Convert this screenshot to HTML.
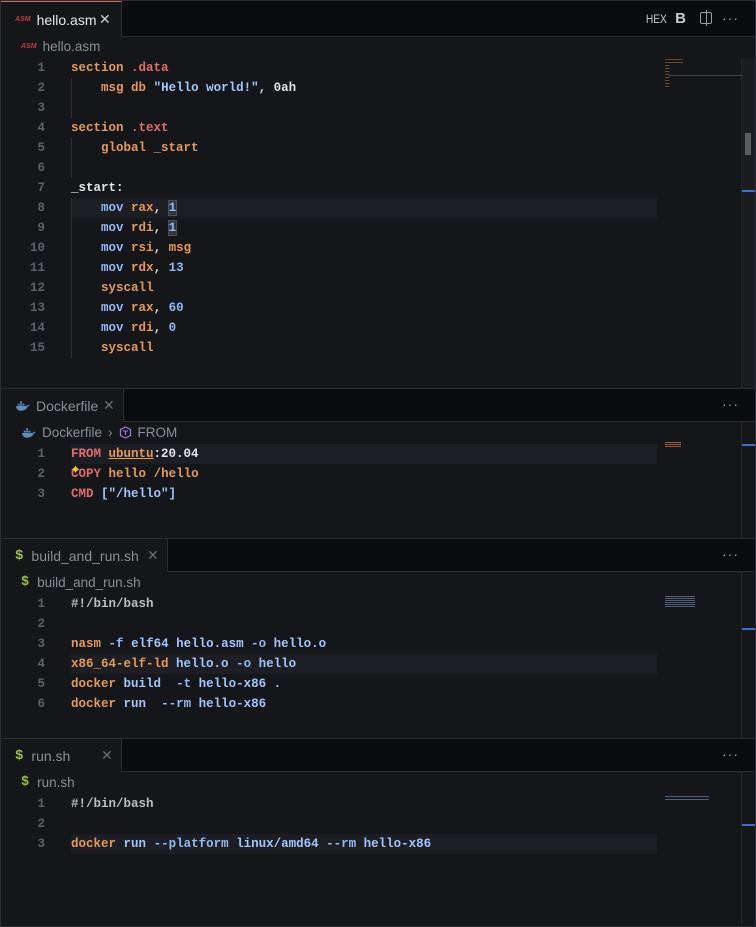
<!DOCTYPE html>
<html><head><meta charset="utf-8"><style>
*{margin:0;padding:0;box-sizing:border-box}
body{width:756px;height:927px;background:#15161a;overflow:hidden;font-family:"Liberation Sans",sans-serif;position:relative}
.pane{position:absolute;left:0;width:756px;background:#15161a;border-left:1px solid #2b2d33;border-right:1px solid #2b2d33}
.tabbar{position:absolute;left:0;top:0;right:0;background:#0a0b0e;border-bottom:1px solid #2b2d33}
.tab{position:absolute;left:0;top:0;bottom:-1px;background:#15161a;border-right:1px solid #2b2d33;color:#8a8d95;font-size:14px;display:flex;align-items:center;padding-left:14px}
.tab.act{color:#e8e8ea;border-top:1px solid #c8705a}
.x{position:absolute;font-size:14px;color:#6a6d74;font-weight:300}
.bc{position:absolute;left:20px;color:#8a8d95;font-size:13.5px;display:flex;align-items:center;gap:6px}
.ln{position:absolute;left:0;width:44px;text-align:right;font:bold 12.5px "Liberation Mono",monospace;color:#5d6068;line-height:20px}
.ln.c{color:#e8e8ea}
.code{position:absolute;left:70px;font:bold 12.5px "Liberation Mono",monospace;line-height:20px;white-space:pre;color:#d8d9dc}
.hl{position:absolute;left:70px;width:586px;height:20px;background:#1c1e23}
.o{color:#e59a54}.r{color:#e06c6c}.b{color:#8fbaf5}.s{color:#9ec6ff}.g{color:#b9bcc2}.w{color:#e3e4e6}
.dots{position:absolute;right:16px;color:#9a9da4;font-size:14px;letter-spacing:1px}
.sb{position:absolute;right:0;width:14px;border-left:1px solid #24262b}
.mark{position:absolute;right:0;width:13px;height:2px;background:#3d6fd0}
.asm{color:#c03a45;font-size:7px;font-weight:bold;font-style:italic}
.dl{color:#9ac131;font-weight:bold;font-family:"Liberation Mono",monospace}
.guide{position:absolute;left:70px;width:1px;background:#2e3036}
</style></head><body>
<svg width="0" height="0" style="position:absolute"><defs><symbol id="whale" viewBox="0 0 16 12"><path d="M1 6h11c1 0 1.5-1 2-1.5l1.5 .5c-.5 1-1.2 1.3-1.8 1.4C12.5 9.5 10 11 6 11 3 11 1.5 9 1 6z" fill="#5d8cbf"/><rect x="3" y="3.5" width="2" height="2" fill="#5d8cbf"/><rect x="5.5" y="3.5" width="2" height="2" fill="#5d8cbf"/><rect x="8" y="3.5" width="2" height="2" fill="#5d8cbf"/><rect x="5.5" y="1" width="2" height="2" fill="#5d8cbf"/></symbol></defs></svg>

<div class="pane" style="top:0;height:388px;border-top:1px solid #2b2d33">
 <div class="tabbar" style="height:36px">
  <div class="tab act" style="width:121px"><span class="asm" style="margin-right:6px">ASM</span>hello.asm<span class="x" style="left:98px;color:#d0d0d3">✕</span></div>
  <div style="position:absolute;right:86px;top:11px;color:#c9cbcf;font-size:12px;transform:scaleX(.85)">HEX</div>
  <div style="position:absolute;right:69px;top:9px;color:#c9cbcf;font-size:15px;font-weight:bold">B</div>
  <div style="position:absolute;right:43px;top:11px;width:12px;height:12px;border:1px solid #9a9da4;border-radius:2px"><div style="position:absolute;left:5px;top:-3px;width:1px;height:16px;background:#9a9da4"></div></div>
  <div class="dots" style="top:9px">···</div>
 </div>
 <div class="bc" style="top:38px"><span class="asm">ASM</span>hello.asm</div>
 <div class="sb" style="top:57px;bottom:0;background:#1b1c20"><div style="position:absolute;left:3px;top:75px;width:6px;height:22px;background:#5a5c62"></div><div class="mark" style="top:132px"></div></div>
 <div style="position:absolute;left:668px;top:74px;width:74px;height:1px;background:#45474c"></div>
 <div style="position:absolute;left:664px;top:58px;width:30px;height:30px;background:repeating-linear-gradient(#8a5a30 0 1px,transparent 1px 3px);opacity:.7;clip-path:polygon(0 0,60% 0,60% 15%,15% 15%,15% 100%,0 100%)"></div>
 <div class="hl" style="top:197px"></div>
 <div class="guide" style="top:77px;height:40px"></div>
 <div class="guide" style="top:137px;height:40px"></div>
 <div class="guide" style="top:197px;height:160px"></div>
 <div class="ln" style="top:57px">1<br>2<br>3<br>4<br>5<br>6<br>7<br><span class="c">8</span><br>9<br>10<br>11<br>12<br>13<br>14<br>15</div>
 <div class="code" style="top:57px"><span class="o">section</span> <span class="r">.data</span>
    <span class="o">msg</span> <span class="o">db</span> <span class="s">"Hello world!"</span>, <span class="w">0ah</span>

<span class="o">section</span> <span class="r">.text</span>
    <span class="o">global</span> <span class="o">_start</span>

<span class="w">_start:</span>
    <span class="b">mov</span> <span class="o">rax</span>, <span class="b" style="background:#2e3440;outline:1px solid #4a4f5a">1</span>
    <span class="b">mov</span> <span class="o">rdi</span>, <span class="b" style="background:#2e3440;outline:1px solid #4a4f5a">1</span>
    <span class="b">mov</span> <span class="o">rsi</span>, <span class="o">msg</span>
    <span class="b">mov</span> <span class="o">rdx</span>, <span class="b">13</span>
    <span class="o">syscall</span>
    <span class="b">mov</span> <span class="o">rax</span>, <span class="b">60</span>
    <span class="b">mov</span> <span class="o">rdi</span>, <span class="b">0</span>
    <span class="o">syscall</span></div>
</div>

<div class="pane" style="top:388px;height:150px;border-top:1px solid #2b2d33">
 <div class="tabbar" style="height:33px">
  <div class="tab" style="width:123px"><svg width="15" height="12" style="margin-right:6px"><use href="#whale"/></svg>Dockerfile<span class="x" style="left:102px">✕</span></div>
  <div class="dots" style="top:7px">···</div>
 </div>
 <div class="bc" style="top:36px"><svg width="15" height="12"><use href="#whale"/></svg>Dockerfile <span>›</span><svg width="13" height="13" viewBox="0 0 13 13"><path d="M6.5 1l5 2.5v6l-5 2.5-5-2.5v-6z" fill="none" stroke="#a77be0" stroke-width="1.2"/><path d="M4 5h5M6.5 5v4" stroke="#a77be0" stroke-width="1.1"/></svg>FROM</div>
 <div class="sb" style="top:33px;bottom:0"><div class="mark" style="top:22px"></div></div>
 <div style="position:absolute;left:664px;top:53px;width:16px;height:6px;background:repeating-linear-gradient(#9a5a40 0 1px,transparent 1px 2px)"></div>
 <div class="hl" style="top:55px"></div>
 <div class="ln" style="top:55px"><span class="c">1</span><br>2<br>3</div>
 <div class="code" style="top:55px"><span class="r">FROM</span> <span class="o" style="text-decoration:underline">ubuntu</span><span class="w">:20.04</span>
<span class="r">COPY</span> <span class="o">hello</span> <span class="o">/hello</span>
<span class="r">CMD</span> <span class="s">["/hello"]</span></div>
 <div style="position:absolute;left:69px;top:73px;color:#f5c518;font-size:13px">✦</div>
</div>

<div class="pane" style="top:538px;height:200px;border-top:1px solid #2b2d33">
 <div class="tabbar" style="height:33px">
  <div class="tab" style="width:167px"><span class="dl" style="margin-right:8px">$</span>build_and_run.sh<span class="x" style="left:146px">✕</span></div>
  <div class="dots" style="top:7px">···</div>
 </div>
 <div class="bc" style="top:36px"><span class="dl" style="margin-right:2px">$</span>build_and_run.sh</div>
 <div class="sb" style="top:33px;bottom:0"><div class="mark" style="top:56px"></div></div>
 <div style="position:absolute;left:664px;top:57px;width:30px;height:12px;background:repeating-linear-gradient(#6a7ea0 0 1px,transparent 1px 2px);opacity:.7"></div>
 <div class="hl" style="top:115px"></div>
 <div class="ln" style="top:55px">1<br>2<br>3<br><span class="c">4</span><br>5<br>6</div>
 <div class="code" style="top:55px"><span class="g">#!/bin/bash</span>

<span class="o">nasm</span> <span class="b">-f</span> <span class="s">elf64 hello.asm</span> <span class="b">-o</span> <span class="s">hello.o</span>
<span class="o">x86_64-elf-ld</span> <span class="s">hello.o</span> <span class="b">-o</span> <span class="s">hello</span>
<span class="o">docker</span> <span class="s">build</span>  <span class="b">-t</span> <span class="s">hello-x86 .</span>
<span class="o">docker</span> <span class="s">run</span>  <span class="b">--rm</span> <span class="s">hello-x86</span></div>
</div>

<div class="pane" style="top:738px;height:189px;border-top:1px solid #2b2d33;border-bottom:1px solid #2b2d33">
 <div class="tabbar" style="height:33px">
  <div class="tab" style="width:121px"><span class="dl" style="margin-right:8px">$</span>run.sh<span class="x" style="left:100px">✕</span></div>
  <div class="dots" style="top:7px">···</div>
 </div>
 <div class="bc" style="top:36px"><span class="dl" style="margin-right:2px">$</span>run.sh</div>
 <div class="sb" style="top:33px;bottom:0"><div class="mark" style="top:52px"></div></div>
 <div style="position:absolute;left:664px;top:57px;width:44px;height:6px;background:repeating-linear-gradient(#6a7ea0 0 1px,transparent 1px 3px);opacity:.7"></div>
 <div class="hl" style="top:95px"></div>
 <div class="ln" style="top:55px">1<br>2<br><span class="c">3</span></div>
 <div class="code" style="top:55px"><span class="g">#!/bin/bash</span>

<span class="o">docker</span> <span class="s">run</span> <span class="b">--platform</span> <span class="s">linux/amd64</span> <span class="b">--rm</span> <span class="s">hello-x86</span></div>
</div>
</body></html>
